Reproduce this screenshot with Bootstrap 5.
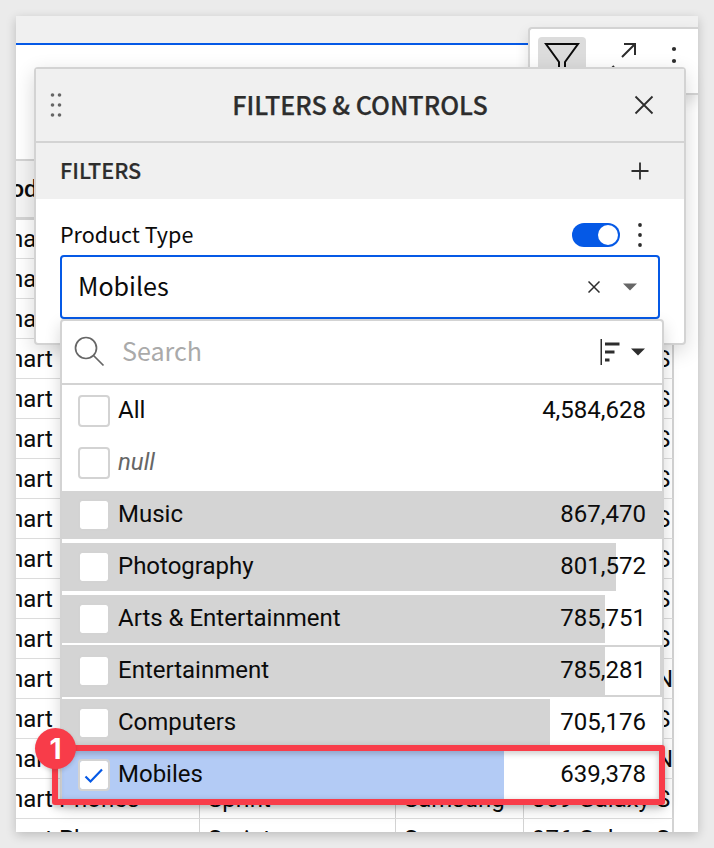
<!DOCTYPE html>
<html lang="en">
<head>
<meta charset="utf-8">
<meta name="viewport" content="width=device-width, initial-scale=1">
<title>Filters &amp; Controls</title>
<link href="https://cdn.jsdelivr.net/npm/bootstrap@5.3.0/dist/css/bootstrap.min.css" rel="stylesheet">
<style>
  body { width: 714px; height: 848px; overflow: hidden; background: #ebebeb; padding: 16px; color: #0b0b0b;
    font: 24px/1 Roboto, sans-serif; }
  .src { font-family: "Noto Sans CJK SC", sans-serif; }
  .src span { position: relative; top: -1px; }
  .src .panel-title { top: 0; }
  .frame { width: 682px; height: 816px; background: #fff; }
  .frame-shadow { box-shadow: 0 3px 10px rgba(0,0,0,.2); }
  .topbar { height: 29px; background: #f0f0f0; border-bottom: 2px solid #0559e6; }
  .grid-head { margin: 114px 0 0 -38px; width: 696px; height: 61px; background: #f4f4f4;
    border: solid #d3d3d3; border-width: 2px 2px 3px 0; font-weight: 500; }
  .grid-head .grid-cell { line-height: 56px; }
  .grid-row { margin-left: -37px; width: 695px; height: 40px; border-bottom: 1px solid #dcdcdc;
    border-right: 2px solid #d3d3d3; }
  .grid-cell { padding-left: 8px; border-right: 1px solid #d3d3d3; white-space: nowrap; overflow: hidden; flex: none; line-height: 40px; }
  .grid-row:first-child { height: 39px; }
  .grid-row:first-child .grid-cell { line-height: 38px; }
  .c1 { width: 221px; padding-left: 9px; } .c2 { width: 196px; } .c3 { width: 128px; } .c4 { width: 148px; border-right: 0; }
  .toolbox { left: 528px; top: 27px; width: 170px; height: 68px; background: #fff; border: 2px solid #d3d3d3;
    border-right: 0; border-radius: 4px 0 0 0; padding: 8px; box-shadow: 0 6px 14px rgba(0,0,0,.12); clip-path: inset(-20px 0 -20px -20px); }
  .tool-on { width: 48px; height: 48px; background: #dcdcdc; border-radius: 4px; }
  .panel { left: 34px; top: 67px; width: 652px; height: 278px; background: #fff; border: 2px solid #d3d3d3;
    border-radius: 4px; box-shadow: 0 6px 20px rgba(0,0,0,.16); }
  .panel-head { height: 74px; background: #f0f0f0; border-bottom: 2px solid #d3d3d3; padding: 0 28px 0 14px;
    font-size: 25.1px; font-weight: 500; color: #2d2d2d; -webkit-text-stroke: .25px #2d2d2d; }
  .panel-sub { height: 56px; background: #f0f0f0; padding: 0 32px 0 24px; font-size: 21.6px; font-weight: 500; color: #2d2d2d; -webkit-text-stroke: .2px #2d2d2d; }
  .field-row { height: 56px; padding: 16px 34px 0 24px; font-size: 21.5px; }
  .toggle { width: 48px; height: 24px; border-radius: 12px; background: #0559e6; padding: 2px; }
  .knob { width: 20px; height: 20px; border-radius: 50%; background: #fff; }
  .picker { height: 64px; margin: 0 24px; border: 2px solid #0559e6; border-radius: 4px; padding: 0 21px 0 16px; font-size: 25.1px; }
  .clear-x { margin-right: -1px; }
  .drop { left: 60px; top: 319px; width: 604px; height: 484px; background: #fff; border: 2px solid #d3d3d3;
    border-radius: 4px; box-shadow: 0 6px 16px rgba(0,0,0,.16); }
  .search { height: 64px; border-bottom: 2px solid #d3d3d3; padding: 0 15px 0 12px; font-size: 25.1px; color: #aaa; }
  .sort-caret { margin-left: 9px; }
  .opt { height: 52px; padding: 0 16px; border: 2px solid transparent; border-width: 2px 0; background-clip: padding-box; position: relative; }
  .opt-hover { border-color: #d3d3d3; box-shadow: inset -2px 0 #d3d3d3; }
  .bar { position: absolute; left: 0; top: 0; bottom: 0; background: #d4d4d4; }
  .bar-on { background: #b3cbf5; }
  .tick { width: 32px; height: 32px; border: 2px solid #d3d3d3; border-radius: 4px; background: #fff; background-clip: padding-box; position: relative; }
  .opt-text { position: relative; flex: 1; padding-left: 8px; top: -1px; }
  .opt-null { color: #666; }
  .opt-num { position: relative; top: -1px; }
  .mark-box { left: 52px; top: 745px; width: 613px; height: 60px; border: 6px solid #f83c49; border-radius: 3px;
    filter: drop-shadow(0 2px 3px rgba(0,0,0,.25)); }
  .mark-dot { left: 35px; top: 728px; width: 41px; height: 41px; border-radius: 50%; background: #f83c49; color: #fff;
    font: 700 28px/1 Inter, sans-serif; box-shadow: 0 2px 4px rgba(0,0,0,.15); }
</style>
</head>
<body class="position-relative">
<div class="frame-shadow">
<main class="frame overflow-hidden">
  <div class="topbar"></div>
  <div class="grid-head d-flex"><div class="grid-cell c1">Product</div></div>
  <div id="rows"></div>
</main>
</div>

<div class="toolbox position-absolute d-flex">
  <div class="tool-on"><svg class="d-block" width="48" height="48" fill="none" stroke="#0b0b0b" stroke-width="2"><path d="M8 7h32L27 25v14l-6-4V25z"/></svg></div>
  <svg width="48" height="48" class="ms-3" fill="none" stroke="#2d2d2d" stroke-width="2"><path d="M22 7h11v11M33 7L20 20M12 29L8 33M8 31v4h11"/></svg>
  <svg class="ms-3" width="24" height="48" fill="#2d2d2d"><circle cx="8" cy="12" r="2.100"/><circle cx="8" cy="24" r="2.100"/><circle cx="8" cy="36" r="2.100"/></svg>
</div>

<section class="panel src position-absolute">
  <div class="panel-head d-flex align-items-center justify-content-between">
    <svg width="38" height="26" fill="#666"><circle cx="2.500" cy="3" r="1.800"/><circle cx="9.500" cy="3" r="1.800"/><circle cx="2.500" cy="13" r="1.800"/><circle cx="9.500" cy="13" r="1.800"/><circle cx="2.500" cy="23" r="1.800"/><circle cx="9.500" cy="23" r="1.800"/></svg>
    <span class="panel-title mx-auto">FILTERS &amp; CONTROLS</span>
    <svg width="24" height="24" stroke="#2d2d2d" stroke-width="1.800"><path d="M3.500 3.500l17 17M20.500 3.500l-17 17"/></svg>
  </div>
  <div class="panel-sub d-flex align-items-center justify-content-between">
    <span>FILTERS</span>
    <svg width="24" height="24" stroke="#2d2d2d" stroke-width="1.800"><path d="M12 3.500v17M3.500 12h17"/></svg>
  </div>
  <div class="field-row d-flex align-items-center">
    <span class="me-auto">Product Type</span>
    <div class="toggle d-flex justify-content-end"><div class="knob"></div></div>
    <svg class="ms-3" width="14" height="26" fill="#2d2d2d"><circle cx="4" cy="3" r="1.900"/><circle cx="4" cy="13" r="1.900"/><circle cx="4" cy="23" r="1.900"/></svg>
  </div>
  <div class="picker d-flex align-items-center">
    <span class="me-auto">Mobiles</span>
    <svg class="clear-x" width="12" height="12" stroke="#2d2d2d" stroke-width="1.500"><path d="M.5.5l11 11M11.500.5l-11 11"/></svg>
    <svg class="ms-4" width="14" height="8" fill="#666"><path d="M0 .5h14L7 7.500z"/></svg>
  </div>
</section>

<section class="drop position-absolute">
  <div class="search src d-flex align-items-center">
    <svg width="32" height="32" fill="none" stroke="#666" stroke-width="1.700"><circle cx="12" cy="12" r="10.500"/><path d="M19.500 19.500L29.500 29.500"/></svg>
    <span class="me-auto ps-3">Search</span>
    <svg width="22" height="26" fill="#2d2d2d"><path d="M.5 0h1.500v26H.5zM5 3.500H19.500v3H5zM5 11.500H14.500v3H5zM5 19.500H9.500v3H5z"/></svg>
    <svg class="sort-caret" width="16" height="8" fill="#2d2d2d"><path d="M0 .5h14L7 7.500z"/></svg>
  </div>
  <div class="opt d-flex align-items-center"><span class="tick"></span><span class="opt-text">All</span><span class="opt-num">4,584,628</span></div>
  <div class="opt d-flex align-items-center"><span class="tick"></span><span class="opt-text opt-null fst-italic">null</span></div>
  <div class="opt d-flex align-items-center"><div class="bar" style="width:100%"></div><span class="tick"></span><span class="opt-text">Music</span><span class="opt-num">867,470</span></div>
  <div class="opt d-flex align-items-center"><div class="bar" style="width:92.4%"></div><span class="tick"></span><span class="opt-text">Photography</span><span class="opt-num">801,572</span></div>
  <div class="opt d-flex align-items-center"><div class="bar" style="width:90.5%"></div><span class="tick"></span><span class="opt-text">Arts &amp; Entertainment</span><span class="opt-num">785,751</span></div>
  <div class="opt opt-hover d-flex align-items-center"><div class="bar" style="width:90.5%"></div><span class="tick"></span><span class="opt-text">Entertainment</span><span class="opt-num">785,281</span></div>
  <div class="opt d-flex align-items-center"><div class="bar" style="width:81.3%"></div><span class="tick"></span><span class="opt-text">Computers</span><span class="opt-num">705,176</span></div>
  <div class="opt d-flex align-items-center"><div class="bar bar-on" style="width:73.7%"></div><span class="tick"><svg class="d-block" width="28" height="28" fill="none" stroke="#0559e6" stroke-width="2.200"><path d="M5.500 15.500l5 5L22 8.500"/></svg></span><span class="opt-text">Mobiles</span><span class="opt-num">639,378</span></div>
</section>

<div class="mark-box position-absolute"></div>
<div class="mark-dot position-absolute d-flex align-items-center justify-content-center">1</div>

<script src="https://cdn.jsdelivr.net/npm/bootstrap@5.3.0/dist/js/bootstrap.bundle.min.js"></script>
<script>
  const models = Array(16).fill('869 Galaxy S');
  models[11] = models[13] = '869 Galaxy N';
  models[15] = '976 Galaxy S';
  document.getElementById('rows').innerHTML = models.map(m =>
    `<div class="grid-row d-flex"><div class="grid-cell c1">Smart Phones</div><div class="grid-cell c2">Sprint</div><div class="grid-cell c3">Samsung</div><div class="grid-cell c4">${m}</div></div>`).join('');
</script>
</body>
</html>
